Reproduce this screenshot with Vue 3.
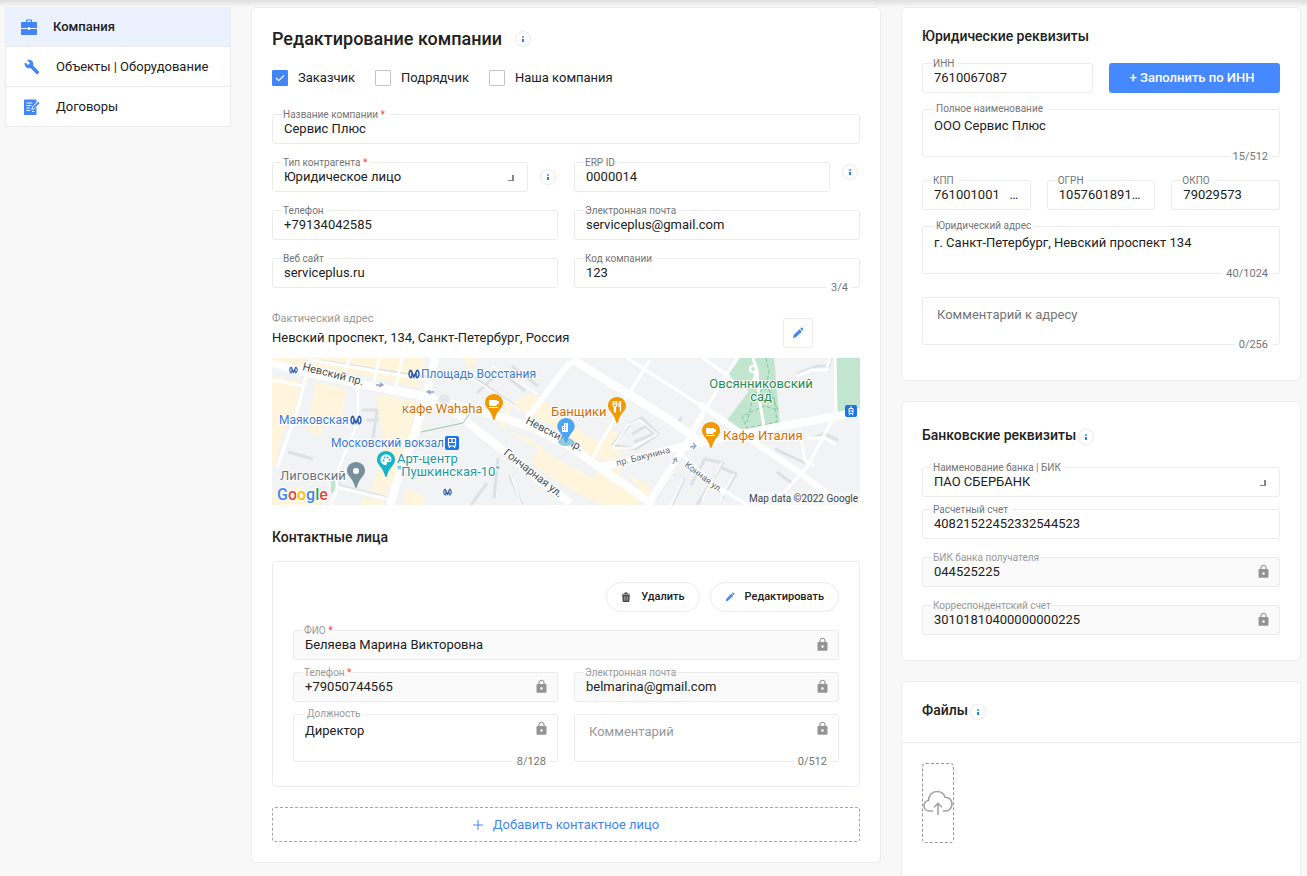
<script setup>
import { ref, reactive } from 'vue'

const nav = [
  { id: 'company', title: 'Компания', active: true },
  { id: 'objects', title: 'Объекты | Оборудование', active: false },
  { id: 'contracts', title: 'Договоры', active: false },
]

const roles = reactive([
  { id: 'customer', title: 'Заказчик', checked: true },
  { id: 'contractor', title: 'Подрядчик', checked: false },
  { id: 'own', title: 'Наша компания', checked: false },
])

const company = reactive({
  name: 'Сервис Плюс',
  type: 'Юридическое лицо',
  erp: '0000014',
  phone: '+79134042585',
  email: 'serviceplus@gmail.com',
  site: 'serviceplus.ru',
  code: '123',
})

const contact = reactive({
  name: 'Беляева Марина Викторовна',
  phone: '+79050744565',
  email: 'belmarina@gmail.com',
  position: 'Директор',
  comment: '',
})

const legal = reactive({
  inn: '7610067087',
  fullName: 'ООО Сервис Плюс',
  address: 'г. Санкт-Петербург, Невский проспект 134',
  comment: '',
})

const codes = reactive([
  { id: 'kpp', title: 'КПП', value: '761001001   …' },
  { id: 'ogrn', title: 'ОГРН', value: '1057601891…' },
  { id: 'okpo', title: 'ОКПО', value: '79029573' },
])

const bank = ref('ПАО СБЕРБАНК')
const account = ref('40821522452332544523')
const lockedBank = [
  { id: 'bik', title: 'БИК банка получателя', value: '044525225' },
  { id: 'corr', title: 'Корреспондентский счет', value: '30101810400000000225' },
]
</script>

<template>
  <svg class="defs" aria-hidden="true">
    <symbol id="i-lock" viewBox="0 0 24 24">
      <path fill="currentColor" d="M18 8h-1V6c0-2.760-2.240-5-5-5S7 3.240 7 6v2H6c-1.100 0-2 .9-2 2v10c0 1.100.9 2 2 2h12c1.100 0 2-.9 2-2V10c0-1.100-.9-2-2-2zm-6 9c-1.100 0-2-.9-2-2s.9-2 2-2 2 .9 2 2-.9 2-2 2zm3.100-9H8.900V6c0-1.710 1.390-3.100 3.100-3.100s3.100 1.390 3.100 3.100v2z" />
    </symbol>
    <symbol id="i-info" viewBox="0 0 16 16">
      <rect x="7" y="5" width="2" height="2" fill="#64a8f8" />
      <rect x="7" y="8" width="2" height="3" fill="#1f80f0" />
    </symbol>
    <symbol id="i-pencil" viewBox="0 0 12 12">
      <path fill="#4285f8" d="M1 11l.7-2.900L7.600 2.200l2.200 2.200-5.900 5.900zM8.200 1.600l.7-.7c.4-.4.900-.4 1.300 0l.9.9c.4.400.4.900 0 1.300l-.7.7z" />
    </symbol>
    <symbol id="i-pin" viewBox="0 0 20 28">
      <path d="M10 1C4.900 1 1 4.900 1 9.800c0 5.200 5.500 7.200 7.600 14.800.3 1.100.6 2.400 1.400 2.400s1.100-1.300 1.400-2.400C13.500 17 19 15 19 9.800 19 4.900 15.100 1 10 1z" />
    </symbol>
    <symbol id="i-metro" viewBox="0 0 12 10">
      <g fill="none" stroke="#2f5fb3" stroke-width="1.500">
        <path d="M3 1C.3 2.500.3 7.500 3 9M9 1c2.700 1.500 2.700 6.500 0 8M3 1l2.900 7L9 1M3 9c1.200-1 1.200-3 .7-5M9 9c-1.200-1-1.200-3-.7-5" />
      </g>
    </symbol>
  </svg>

  <div class="page">
    <nav class="sidebar">
      <a v-for="item in nav" :key="item.id" href="#" class="nav-item" :class="{ active: item.active }">
        <svg v-if="item.id === 'company'" class="nav-icon" viewBox="0 0 16 16">
          <path fill="#4285f8" d="M5 3V1.500C5 .900 5.400.500 6 .500h4c.6 0 1 .4 1 1V3h4c.6 0 1 .4 1 1v5H9V8H7v1H0V4c0-.6.4-1 1-1zm1.200 0h3.600V1.600H6.200zM0 10h7v1h2v-1h7v5c0 .6-.4 1-1 1H1c-.6 0-1-.4-1-1z" />
        </svg>
        <svg v-else-if="item.id === 'objects'" class="nav-icon" viewBox="0 0 24 24">
          <path fill="#4285f8" d="M22.700 19l-9.100-9.100c.9-2.300.4-5-1.500-6.900-2-2-5-2.400-7.400-1.300L9 6 6 9 1.600 4.700C.4 7.100.9 10.100 2.900 12.100c1.900 1.900 4.600 2.400 6.900 1.500l9.100 9.100c.4.4 1 .4 1.400 0l2.300-2.300c.5-.4.5-1.100.1-1.400z" />
        </svg>
        <svg v-else class="nav-icon" viewBox="0 0 16 16">
          <path fill="#4285f8" d="M1 .500h10.500c.6 0 1 .4 1 1V3L8 8l-.8 3 3-.8 2.300-2.300V15c0 .6-.4 1-1 1H1c-.6 0-1-.4-1-1V1.500c0-.6.4-1 1-1z" />
          <path stroke="#fff" stroke-width="1" d="M2.500 4h6M2.500 6.500h5M2.500 9h3.500M2.500 11.500h3.500M8 12.500h2.500" />
          <path fill="#4285f8" d="M8.500 9.800l.4-1.800 5.300-5.300 1.400 1.400-5.300 5.300z" />
        </svg>
        <span>{{ item.title }}</span>
      </a>
    </nav>

    <main class="card main">
      <header class="head">
        <h1>Редактирование компании</h1>
        <button class="info" type="button" aria-label="Справка"><svg><use href="#i-info" /></svg></button>
      </header>

      <div class="roles">
        <label v-for="role in roles" :key="role.id" class="role">
          <input v-model="role.checked" type="checkbox" />
          <svg class="tick" viewBox="0 0 16 16"><path d="M4 8l2.700 2.700L12 5.300" fill="none" stroke="#fff" stroke-width="1.200" /></svg>
          <span>{{ role.title }}</span>
        </label>
      </div>

      <div class="form">
        <div class="field wide">
          <label for="name">Название компании <b>*</b></label>
          <input id="name" v-model="company.name" type="text" />
        </div>
        <div class="with-info">
          <div class="field">
            <label for="type">Тип контрагента <b>*</b></label>
            <select id="type" v-model="company.type"><option>Юридическое лицо</option></select>
            <i class="corner"></i>
          </div>
          <button class="info" type="button" aria-label="Справка"><svg><use href="#i-info" /></svg></button>
        </div>
        <div class="with-info high">
          <div class="field">
            <label for="erp">ERP ID</label>
            <input id="erp" v-model="company.erp" type="text" />
          </div>
          <button class="info" type="button" aria-label="Справка"><svg><use href="#i-info" /></svg></button>
        </div>
        <div class="field">
          <label for="phone">Телефон</label>
          <input id="phone" v-model="company.phone" type="text" />
        </div>
        <div class="field">
          <label for="email">Электронная почта</label>
          <input id="email" v-model="company.email" type="text" />
        </div>
        <div class="field">
          <label for="site">Веб сайт</label>
          <input id="site" v-model="company.site" type="text" />
        </div>
        <div class="field">
          <label for="code">Код компании</label>
          <input id="code" v-model="company.code" type="text" />
          <span class="count">3/4</span>
        </div>
      </div>

      <div class="address">
        <div>
          <p class="caption">Фактический адрес</p>
          <p class="value">Невский проспект, 134, Санкт-Петербург, Россия</p>
        </div>
        <button class="square" type="button" aria-label="Изменить адрес"><svg><use href="#i-pencil" /></svg></button>
      </div>

      <svg class="map" viewBox="0 0 588 147" preserveAspectRatio="xMidYMid slice">
        <rect width="588" height="147" fill="#f1f3f4" />
        <g fill="#fef5dc">
          <path d="M38 0h115l-6 30-62-14-50-9zM0 0h34l-4 10L0 4zM0 18l30 6-11 42H0zM44 24l30 6-4 30-13-4-8 22-14-6zM0 66h14L2 108H0zM105 36l40 8-10 45-22 48-14-4 12-42zM0 133l28-4 24 16v2H0zM90 139l22 4v4H88zM133 130l20 8-2 9h-20zM190 0h15l-7 12z" />
          <path d="M236 46l24-11 38 24 8 12 22 14 3 12-9 24-40-22-24-18-32-12zM232 72l34 18-6 16 35 24 35 17h35l10-9-22-24-48-24-25-22-40-20zM331 79l22 8-10 18-14-6zM348 112l30 16-2 14-28-17zM331 67l15 8-8 14z" />
        </g>
        <g fill="#c2e5cf">
          <path d="M468 0h34l6 66-47 7-6-11 22-29-21-16zM561 0h27v54l-24 4zM59 122l10-3-3 14-7 2z" />
        </g>
        <path d="M494 0l3 14-3 14 8 10 3 26-30 6-5-12 22-10 14 4-10-22-14 6-7 28" fill="none" stroke="#7fc79b" stroke-dasharray="4 2" />

        <g fill="none" stroke="#dde1e6" stroke-linejoin="round" stroke-width="3">
          <path d="M48 3l110 17M86 27v37L65 114v13l50 13M90 52h15l-4 28M95 62h12M16 94l25 7M205 35l23-22 25 20M203 20l40 28M240 8l26 20M250 147l-12-28 12-17M215 125l-16 22M226 100l-4 40M340 88l18-22 12-6 16 16-22 15-22-4M360 76l14-8 8 8-20 8M405 67l5-8M528 73l5 30 10 5M533 105l-30-14M400 147l12-26-12-7-16 27M425 147l26-42-18-4-14 26M450 140l14-24-14-6M505 114l16 12M525 16l20-8h12l2-8M540 80l12-4 14 6" />
        </g>
        <g fill="none" stroke="#fff" stroke-width="3" stroke-linejoin="round">
          <path d="M38 2L26 50 5 110M38 2l120 20M86 27v37L65 114v15l50 12M0 22l30 6M70 18l8-18M102 24l5-24M124 28l6-28M65 130l-6 17M378 2l-23 37-34 60M431 0l27 19M355 0l76 49M465 0l-34 55M301 2l-46 58M481 0l4 12 2 28 5 28M485 11l-4 14M528 73l5 30 10 5M535 80h18l10 6M525 18l15-6h14l4-12M563 0l1 55-29 54-34 38M408 95l33 30 34 22M441 125l12 12" />
          <path d="M200 20l48 32M220 8l46 28M249 147l-10-30 12-16M340 90l16-23 12-5 17 14-24 14zM399 147l12-26-10-7-18 28M450 104l-20 38M462 116l-14 26" stroke-width="1.500" />
        </g>
        <g fill="none" stroke="#fff" stroke-linejoin="round">
          <path stroke-width="8" d="M0 5l28 8 60 13 63 12 34 9 46 13 27 9 40 19 33 24 24 16 26 19M163 0l-8 34-14 46-13 34-10 33M151 44l30 8 24 20 26 20 34 28 33 25M301 2l54 33 43 27 34 24M331 109l40-10 34-9 50-11 50-10 66-12 17-3" />
          <path stroke-width="6" d="M427 46l48 33 53 36 43 32M431 55l-16 30-37 57M298 4l-43 56" />
        </g>
        <circle cx="172" cy="42" r="6" fill="#e5e8ec" />
        <circle cx="481" cy="11" r="3" fill="#c2e5cf" stroke="#fff" stroke-width="2" />
        <path d="M149 74l42-9 7-10" fill="none" stroke="#93cda9" />
        <g stroke="#9aa3c2" stroke-width="1.300" fill="none">
          <path d="M104 27h7m-3-2l3 2-4 2M162 34h-7m3-2l-3 2 4 2M418 89l6-1m-3-3l3 3-3 3M401 106l3-6m-3 2l3-2 1 4" />
        </g>

        <g class="halo street">
          <text transform="translate(30 12) rotate(14)">Невский пр.</text>
          <text transform="translate(253 65) rotate(27)">Невский пр.</text>
          <text transform="translate(231 96) rotate(38)">Гончарная ул.</text>
          <text class="small" transform="translate(345 108) rotate(-14)">пр. Бакунина</text>
          <text class="small" transform="translate(412 108) rotate(37)">Конная ул.</text>
        </g>

        <g class="halo place">
          <g class="transit" fill="#3c78d8">
            <text x="149" y="20">Площадь Восстания</text>
            <text x="7" y="66">Маяковская</text>
            <text x="59" y="89">Московский вокзал</text>
          </g>
          <g fill="#d66f0a">
            <text x="130" y="55">кафе Wahaha</text>
            <text x="279" y="58">Банщики</text>
            <text x="451" y="82">Кафе Италия</text>
          </g>
          <g fill="#1d9aa0">
            <text x="125" y="105">Арт-центр</text>
            <text x="125" y="118">"Пушкинская-10"</text>
          </g>
          <text x="8" y="122" fill="#69757f">Лиговский</text>
          <g fill="#258c52" text-anchor="middle">
            <text x="489" y="30">Овсянниковский</text>
            <text x="489" y="43">сад</text>
          </g>
        </g>

        <use href="#i-metro" x="136" y="11" width="12" height="10" />
        <use href="#i-metro" x="78" y="57" width="12" height="10" />
        <use href="#i-metro" x="17" y="8" width="9" height="8" />
        <use href="#i-metro" x="171" y="130" width="9" height="8" />

        <use href="#i-pin" x="212" y="35" width="20" height="28" fill="#f29900" />
        <path d="M217 42h8v1h2v3h-2c0 1.700-1 2-2 2h-4c-1 0-2-.5-2-2zM217 49h9v1h-9z" fill="#fff" />
        <use href="#i-pin" x="335" y="38" width="20" height="28" fill="#f29900" />
        <path d="M341 43v4c0 1 .5 1.500 1.300 1.600V54h1.200v-5.400c.8-.1 1.300-.6 1.300-1.600v-4M343 43v4M348.500 54V43.500c-1.500.5-1.700 2-1.700 5h1.700" fill="none" stroke="#fff" stroke-width="1.200" />
        <use href="#i-pin" x="429" y="63" width="20" height="28" fill="#f29900" />
        <path d="M434 70h8v1h2v3h-2c0 1.700-1 2-2 2h-4c-1 0-2-.5-2-2zM434 77h9v1h-9z" fill="#fff" />
        <use href="#i-pin" x="104" y="92" width="20" height="28" fill="#12b5cb" />
        <path d="M114 96.500c-3.200 0-5.500 2.300-5.500 5.200s2.300 5.300 5.200 5.300c1.800 0 .8-2 1.600-2.700.9-.8 4.200.4 4.200-2.600s-2.400-5.200-5.500-5.200z" fill="#fff" />
        <g fill="#12b5cb"><circle cx="111.500" cy="102.500" r="1" /><circle cx="112.500" cy="99.500" r="1" /><circle cx="115.500" cy="99.500" r="1" /><circle cx="117.500" cy="101.800" r="1" /></g>
        <use href="#i-pin" x="74" y="103" width="20" height="28" fill="#78909c" />
        <circle cx="84" cy="113" r="3" fill="#fff" />

        <ellipse cx="294" cy="84" rx="8" ry="4" fill="#8fcbe0" />
        <use href="#i-pin" x="284" y="59" width="20" height="27" fill="#4ba5f5" />
        <path d="M290 74v-6h2v-3h4v9z" fill="#fff" /><path d="M293.500 66.500v6M291.500 69v4" stroke="#4ba5f5" stroke-dasharray="1 1" />

        <rect x="173" y="78" width="14" height="14" rx="2" fill="#1a73e8" />
        <path d="M176.500 80.500h7v7.500h-7zM177 90l1.500-2M183 90l-1.500-2M176.500 84.500h7M180 81v3" fill="none" stroke="#fff" stroke-width="1.200" />
        <rect x="573" y="47" width="12" height="12" rx="2" fill="#1a73e8" />
        <path d="M577 50.500h4v5h-4zM577 53h4M577 57.500l1-1.500M581 57.500l-1-1.500M578 49h2" fill="none" stroke="#fff" />

        <g class="halo google">
          <text x="5" y="142"><tspan fill="#4285f4">G</tspan><tspan fill="#ea4335">o</tspan><tspan fill="#fbbc05">o</tspan><tspan fill="#4285f4">g</tspan><tspan fill="#34a853">l</tspan><tspan fill="#ea4335">e</tspan></text>
        </g>
        <rect x="476" y="134" width="112" height="13" fill="#f8f8f8" fill-opacity=".8" />
        <text class="credit" x="586" y="144" text-anchor="end">Map data ©2022 Google</text>
      </svg>

      <h2 class="contacts-title">Контактные лица</h2>
      <section class="contact">
        <div class="actions">
          <button class="pill" type="button">
            <svg viewBox="0 0 12 12"><path fill="#444" d="M4 1.200C4 .8 4.300.500 4.700.500h2.600c.4 0 .7.3.7.7V2h3v1H1V2h3zM1.500 3.600h9L10 11c0 .6-.4 1-1 1H3c-.6 0-1-.4-1-1z" /><path stroke="#ccc" stroke-width=".8" d="M4 5v5.500M6 5v5.500M8 5v5.500" /></svg>
            Удалить
          </button>
          <button class="pill" type="button"><svg><use href="#i-pencil" /></svg>Редактировать</button>
        </div>
        <div class="form tight">
          <div class="field locked wide">
            <label for="c-name">ФИО <b>*</b></label>
            <input id="c-name" :value="contact.name" type="text" readonly />
            <svg class="lock"><use href="#i-lock" /></svg>
          </div>
          <div class="field locked">
            <label for="c-phone">Телефон <b>*</b></label>
            <input id="c-phone" :value="contact.phone" type="text" readonly />
            <svg class="lock"><use href="#i-lock" /></svg>
          </div>
          <div class="field locked">
            <label for="c-email">Электронная почта</label>
            <input id="c-email" :value="contact.email" type="text" readonly />
            <svg class="lock"><use href="#i-lock" /></svg>
          </div>
          <div class="field area muted">
            <label for="c-position">Должность</label>
            <textarea id="c-position" :value="contact.position" readonly></textarea>
            <svg class="lock"><use href="#i-lock" /></svg>
            <span class="count">8/128</span>
          </div>
          <div class="field area muted">
            <textarea :value="contact.comment" placeholder="Комментарий" aria-label="Комментарий" readonly></textarea>
            <svg class="lock"><use href="#i-lock" /></svg>
            <span class="count">0/512</span>
          </div>
        </div>
      </section>

      <button class="add" type="button">
        <svg viewBox="0 0 10 10"><path d="M5 0v10M0 5h10" stroke="#4285f8" /></svg>
        Добавить контактное лицо
      </button>
    </main>

    <div class="side">
      <section class="card legal">
        <h2>Юридические реквизиты</h2>
        <div class="form inn">
          <div class="field">
            <label for="inn">ИНН</label>
            <input id="inn" v-model="legal.inn" type="text" />
          </div>
          <button class="primary" type="button">+ Заполнить по ИНН</button>
        </div>
        <div class="field area">
          <label for="full">Полное наименование</label>
          <textarea id="full" v-model="legal.fullName"></textarea>
          <span class="count">15/512</span>
        </div>
        <div class="codes">
          <div v-for="code in codes" :key="code.id" class="field">
            <label :for="code.id">{{ code.title }}</label>
            <input :id="code.id" v-model="code.value" type="text" />
          </div>
        </div>
        <div class="field area">
          <label for="legal-address">Юридический адрес</label>
          <textarea id="legal-address" v-model="legal.address"></textarea>
          <span class="count">40/1024</span>
        </div>
        <div class="field area note">
          <textarea v-model="legal.comment" placeholder="Комментарий к адресу" aria-label="Комментарий к адресу"></textarea>
          <span class="count">0/256</span>
        </div>
      </section>

      <section class="card bank">
        <div class="head">
          <h2>Банковские реквизиты</h2>
          <button class="info" type="button" aria-label="Справка"><svg><use href="#i-info" /></svg></button>
        </div>
        <div class="field">
          <label for="bank">Наименование банка | БИК</label>
          <select id="bank" v-model="bank"><option>ПАО СБЕРБАНК</option></select>
          <i class="corner"></i>
        </div>
        <div class="field account">
          <label for="account">Расчетный счет</label>
          <input id="account" v-model="account" type="text" />
        </div>
        <div v-for="item in lockedBank" :key="item.id" class="field locked">
          <label :for="item.id">{{ item.title }}</label>
          <input :id="item.id" :value="item.value" type="text" readonly />
          <svg class="lock"><use href="#i-lock" /></svg>
        </div>
      </section>

      <section class="card files">
        <div class="head">
          <h2>Файлы</h2>
          <button class="info" type="button" aria-label="Справка"><svg><use href="#i-info" /></svg></button>
        </div>
        <button class="upload" type="button" aria-label="Загрузить файл">
          <svg viewBox="0 0 30 26" fill="none" stroke="#a3a3a3" stroke-width="1.600">
            <path d="M10 21H6.500C3.300 21 1 18.700 1 15.700c0-2.700 1.900-4.800 4.500-5.200C5.800 5.300 9.300 1.500 14 1.500c4 0 7 2.300 8 5.700 4.100 0 7 2.900 7 6.800 0 4-2.800 7-6.500 7H20" />
            <path d="M15 25V13.500M11 17.300l4-4 4 4" />
          </svg>
        </button>
      </section>
    </div>
  </div>
</template>

<style>
body {
  margin: 0;
  background: #f8f8f8;
}
</style>

<style scoped>
.defs {
  position: absolute;
  width: 0;
  height: 0;
}
.page {
  box-sizing: border-box;
  min-height: 100vh;
  padding: 7px 6px 0 5px;
  display: grid;
  grid-template-columns: 226px minmax(0, 1fr) 400px;
  gap: 20px;
  background: linear-gradient(#dedede, #f8f8f8 7px);
  font: 13px/20px Roboto, "Noto Sans", sans-serif;
  color: #212121;
}
.page * {
  box-sizing: border-box;
}
h1, h2, p {
  margin: 0;
}
h1 {
  font-size: 18px;
  line-height: 24px;
  font-weight: 500;
}
h2 {
  font-size: 14px;
  line-height: 20px;
  font-weight: 500;
}
button, input, select, textarea {
  font: inherit;
  color: inherit;
  margin: 0;
}
button {
  padding: 0;
  background: #fff;
  cursor: pointer;
}
.card {
  background: #fff;
  border: 1px solid #ececec;
  border-radius: 5px;
  padding: 0 20px;
}

/* Sidebar */
.sidebar {
  align-self: start;
  border: 1px solid #ebebeb;
  border-width: 0 1px;
  background: #fff;
}
.nav-item {
  display: flex;
  align-items: center;
  height: 40px;
  gap: 16px;
  padding-left: 18px;
  border-bottom: 1px solid #ebebeb;
  color: inherit;
  text-decoration: none;
}
.nav-item.active {
  padding-left: 15px;
  background: #ebf1ff;
  font-weight: 500;
}
.nav-icon {
  width: 16px;
  height: 16px;
}

/* Company form */
.main {
  align-self: start;
  padding-bottom: 20px;
}
.head {
  display: flex;
  align-items: center;
}
.main .head {
  gap: 13px;
  padding-top: 19px;
}
.info {
  flex: none;
  display: block;
  width: 16px;
  height: 16px;
  border: 0;
  border-radius: 50%;
  box-shadow: inset 0 0 0 1px #ebebeb;
}
.info svg {
  display: block;
  width: 16px;
  height: 16px;
}
.roles {
  display: flex;
  gap: 20px;
  margin-top: 17px;
}
.role {
  position: relative;
  display: flex;
  align-items: center;
  gap: 10px;
}
.role input {
  appearance: none;
  width: 16px;
  height: 16px;
  border: 1px solid #c4c4c4;
  border-radius: 1px;
  background: #fff;
}
.role input:checked {
  border-color: #4285f8;
  background: #4285f8;
}
.tick {
  position: absolute;
  left: 0;
  width: 16px;
  height: 16px;
  pointer-events: none;
}
.form {
  display: grid;
  grid-template-columns: repeat(2, minmax(0, 1fr));
  gap: 18px 16px;
}
.main > .form {
  margin-top: 26px;
}
.form.tight {
  row-gap: 12px;
  margin-top: 18px;
}
.wide {
  grid-column: 1 / -1;
}
.with-info {
  display: grid;
  grid-template-columns: minmax(0, 1fr) 16px;
  gap: 12px;
  padding-right: 2px;
  align-items: center;
}
.with-info.high .info {
  align-self: start;
  margin-top: 2px;
}

.field {
  position: relative;
  height: 30px;
  border: 1px solid #ebebeb;
  border-radius: 3px;
  background: #fff;
}
.field input, .field select, .field textarea {
  display: block;
  appearance: none;
  width: 100%;
  height: 100%;
  padding: 0 11px;
  border: 0;
  outline: 0;
  background: none;
  text-overflow: ellipsis;
}
.field input {
  padding-bottom: 2px;
}
.field textarea {
  padding-top: 6px;
  resize: none;
  overflow: hidden;
}
.field textarea::placeholder {
  color: #757575;
  opacity: 1;
}
.field textarea:placeholder-shown {
  padding-top: 7px;
  padding-left: 14px;
}
.field label {
  position: absolute;
  top: -5px;
  left: 9px;
  padding: 0 4px 0 1px;
  background: #fff;
  font-size: 10px;
  line-height: 10px;
  color: #757575;
  white-space: nowrap;
}
.field label b {
  font-weight: 400;
  color: #f44336;
}
.field.area {
  height: 48px;
}
.field.area label {
  top: -6px;
  left: 10px;
  padding-left: 3px;
}
.field.locked {
  background: #fafafa;
}
.field.locked label {
  padding-right: 0;
  background: linear-gradient(#fff 5px, #fafafa 5px);
  color: #999;
}
.field.muted label, .field.muted textarea::placeholder {
  color: #999;
}
.count {
  position: absolute;
  right: 7px;
  bottom: -7px;
  padding: 0 4px;
  background: #fff;
  font-size: 11px;
  line-height: 12px;
  color: #757575;
}
.corner {
  position: absolute;
  right: 13px;
  top: 12px;
  width: 6px;
  height: 6px;
  border: solid #858585;
  border-width: 0 2px 1px 0;
  pointer-events: none;
}
.lock {
  position: absolute;
  right: 8px;
  top: 6px;
  width: 15px;
  height: 15px;
  color: #949494;
}

.address {
  display: flex;
  justify-content: space-between;
  margin-top: 30px;
  padding-right: 47px;
}
.caption {
  font-size: 11px;
  line-height: 12px;
  color: #999;
  padding-bottom: 3px;
  margin-top: -5px;
}
.square {
  width: 30px;
  height: 30px;
  border: 1px solid #ebebeb;
  border-radius: 3px;
  display: grid;
  place-items: center;
}
.square svg {
  width: 12px;
  height: 12px;
}

.map {
  display: block;
  width: 100%;
  aspect-ratio: 588 / 147;
  margin-top: 10px;
}
.halo {
  paint-order: stroke;
  stroke: #fff;
  stroke-width: 2px;
  stroke-linejoin: round;
}
.place {
  font-size: 13px;
}
.transit {
  font-size: 12px;
}
.street {
  font-size: 11px;
  fill: #4a4f55;
}
.street .small {
  font-size: 9px;
  fill: #666c73;
}
.google {
  font-size: 16px;
  font-weight: 500;
}
.credit {
  font-size: 10px;
  fill: #444;
}

.contacts-title {
  margin-top: 22px;
}
.contact {
  margin-top: 14px;
  padding: 20px 20px 24px;
  border: 1px solid #ececf4;
  border-radius: 4px;
}
.actions {
  display: flex;
  justify-content: flex-end;
  gap: 10px;
}
.pill {
  display: flex;
  align-items: center;
  gap: 10px;
  height: 30px;
  padding: 0 14px;
  border: 1px solid #ebebeb;
  border-radius: 15px;
  font-size: 11px;
  font-weight: 500;
}
.pill svg {
  width: 10px;
  height: 10px;
}
.add {
  display: flex;
  align-items: center;
  justify-content: center;
  gap: 10px;
  width: 100%;
  height: 35px;
  margin-top: 20px;
  border: 1px dashed #a6a6a6;
  border-radius: 3px;
  color: #4285f8;
}
.add svg {
  width: 10px;
  height: 10px;
}

/* Right column */
.side {
  display: flex;
  flex-direction: column;
  gap: 20px;
}
.legal {
  padding-top: 18px;
  padding-bottom: 35px;
}
.inn {
  margin: 17px 0 16px;
}
.primary {
  height: 30px;
  padding-right: 5px;
  border: 0;
  border-radius: 3px;
  background: #4688ff;
  color: #fff;
  font-weight: 500;
}
.codes {
  display: grid;
  grid-template-columns: repeat(3, minmax(0, 1fr));
  gap: 16px;
  margin: 23px 0 16px;
}
.note {
  margin-top: 23px;
}
.side .head {
  gap: 2px;
}
.side .info {
  margin-top: 3px;
}
.bank {
  padding-top: 23px;
  padding-bottom: 25px;
}
.bank .head {
  margin-bottom: 22px;
}
.bank .account {
  margin-top: 12px;
}
.bank .locked {
  margin-top: 18px;
}
.files {
  flex: 1;
  padding: 0;
  border-bottom: 0;
  border-radius: 5px 5px 0 0;
}
.files .head {
  height: 61px;
  padding: 0 20px 4px;
  border-bottom: 1px solid #ebebeb;
}
.upload {
  display: grid;
  place-items: center;
  width: 32px;
  height: 80px;
  margin: 20px;
  border: 1px dashed #999;
  border-radius: 4px;
}
.upload svg {
  width: 30px;
  height: 26px;
}
</style>
